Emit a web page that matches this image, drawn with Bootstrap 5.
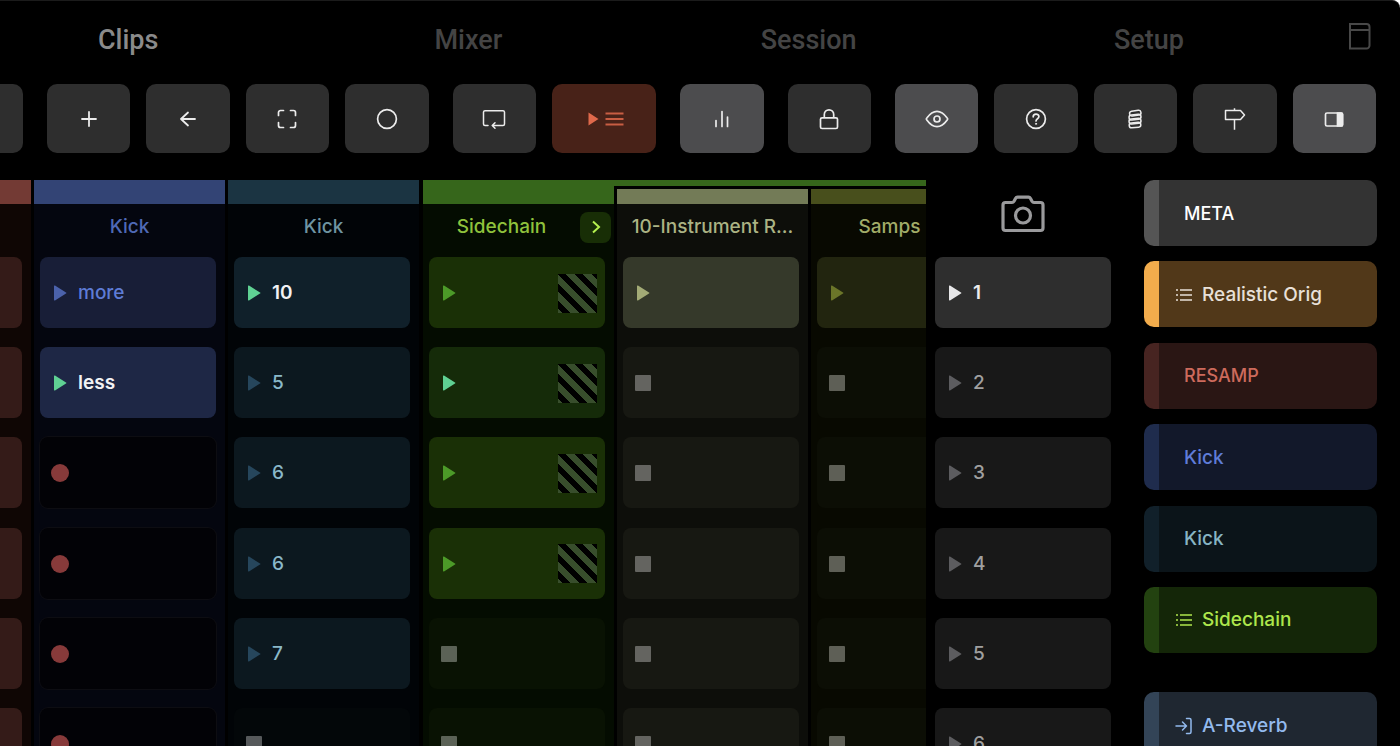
<!DOCTYPE html>
<html lang="en">
<head>
<meta charset="utf-8">
<meta name="viewport" content="width=device-width, initial-scale=1">
<title>Clips</title>
<link href="https://cdn.jsdelivr.net/npm/bootstrap@5.3.0/dist/css/bootstrap.min.css" rel="stylesheet">
<style>
  body { background: #fff; font-family: Inter, "Liberation Sans", sans-serif; font-size: 19px; font-weight: 500; line-height: 24px; }
  button { font: inherit; }
  svg { display: block; flex: none; }
  .app { background: #000; border-top: 1px solid #1b1b1b; border-top-right-radius: 8px; }

  /* main tabs */
  .tabs { height: 83px; }
  .tab-strip { margin-left: -42px; }
  .tab-strip a { color: #444; font-family: Roboto, "Liberation Sans", sans-serif; font-size: 27px; font-weight: 500; line-height: 32px; padding-bottom: 6px; }
  .tab-strip a.active { color: #8a8a8a; }
  .tab-end { width: 81px; color: #484848; padding-bottom: 14px; }

  /* toolbar */
  .toolbar { gap: 16px; padding-right: 24px; }
  .tool { flex: 84 1 0; height: 69px; border: 0; border-radius: 10px; background: #2e2e2e; color: #ececec; padding: 0; }
  .tool.on { background: #4c4c4e; }
  .tool.wide { flex-grow: 105; background: #482218; color: #df694b; gap: 6px; }
  .tool.cut { flex: none; width: 23px; border-radius: 0 10px 10px 0; }

  /* clip grid */
  .board { margin-top: 27px; }
  .tracks { gap: 3px; }
  .track { width: 191px; flex: none; background: var(--bg); }
  .track.edge { width: 31px; }
  .bar { height: 24px; background: var(--bar); }
  .folder { margin-left: 1px; background: #000; }
  .folder .folder-line { height: 6px; background: #36661b; }
  .inner { gap: 3px; padding-left: 3px; }
  .inner .track { margin-top: 3px; }
  .inner .bar { height: 15px; }
  .track-head { height: 46px; color: var(--head); margin-bottom: 7px; }
  .track-head .with-toggle { width: 157px; }
  .toggle { width: 31px; height: 31px; border: 0; border-radius: 8px; background: #182e06; color: #b4f04e; padding: 0; }
  .cells { height: 522px; padding: 0 9px 0 6px; }
  .edge .cells { padding-left: 0; }
  .clip { height: 71px; flex: none; border: 0; border-radius: 8px; background: var(--cell); color: var(--text); padding: 1px 8px 0 11px; gap: 9px; text-align: left; }
  .edge .clip { border-radius: 0 8px 8px 0; }
  .clip svg { color: var(--tri); }
  .clip.empty { background: var(--empty); }
  .clip.empty svg { color: var(--stop); }
  .clip.arm { background: #020206; box-shadow: 0 0 0 1px #0d0d12; }
  .clip.arm svg { color: #873a3a; }
  .clip.live { background: var(--live, var(--cell)); color: #f2f2f4; font-weight: 600; }
  .clip.live svg { color: #5fd193; }
  .hatch { width: 39px; height: 39px; background: repeating-linear-gradient(45deg, #384e2c 0 3px, #000 3px 9px, #384e2c 9px 12px); }

  .t-red { --bar: #733a34; --bg: #0f0604; --cell: #341b18; }
  .t-blue { --bar: #334475; --bg: #04060f; --cell: #181e37; --live: #1e2745; --head: #4f69b6; --text: #5e7cd6; --tri: #4b62ab; }
  .t-teal { --bar: #1b3442; --bg: #010407; --cell: #0c181f; --live: #10202a; --head: #6f94a2; --text: #8ab8c9; --tri: #26465c; --empty: #030709; --stop: #56595b; }
  .t-green { --bar: #36661b; --bg: #040c01; --cell: #1a3006; --live: #152b09; --head: #8fc23c; --tri: #4c9a28; --empty: #091203; --stop: #5b6256; }
  .t-sage { --bar: #737b57; --bg: #0d0e0a; --cell: #35392a; --head: #abb384; --tri: #a3ab76; --empty: #171812; --stop: #646460; }
  .t-olive { --bar: #484f1c; --bg: #080901; --cell: #22250f; --head: #a1ac68; --tri: #6b7529; --empty: #0c0e05; --stop: #5e5f56; }

  /* scenes */
  .scenes { width: 176px; margin-left: 9px; --cell: #181818; --text: #a0a0a0; --tri: #5c5c5f; }
  .snapshot { height: 67px; border: 0; background: none; color: #9a9a9c; padding: 0; margin-bottom: 10px; }
  .scenes .cells { padding: 0; }
  .scenes .clip.now { background: #2e2e2e; color: #ececec; font-weight: 600; --tri: #e6e6e8; }

  /* track list */
  .side { width: 233px; margin: 0 23px 0 33px; }
  .side-group { height: 473px; }
  .side-item { height: 66px; flex: none; border: 0; border-left: 15px solid var(--tab); border-radius: 10px; background: var(--fill); color: var(--ink); padding: 1px 0 0 25px; text-align: left; }
  .side-item.iconed { padding-left: 16px; gap: 9px; }
  .side-item.caps { font-size: 18px; }
</style>
</head>
<body>
<svg width="0" height="0" class="position-absolute" aria-hidden="true">
  <symbol id="play" viewBox="0 0 18 18"><path d="M3 2.2Q3 1 4 1.6L15 8.4Q16 9 15 9.6L4 16.4Q3 17 3 15.8Z" fill="currentColor"/></symbol>
  <symbol id="stop" viewBox="0 0 18 18"><rect x="1" y="1" width="16" height="16" rx="1" fill="currentColor"/></symbol>
  <symbol id="rec" viewBox="0 0 18 18"><circle cx="9" cy="9" r="9" fill="currentColor"/></symbol>
  <symbol id="list" viewBox="0 0 18 18"><path d="M1 4h2M1 9h2M1 14h2M5 4h12M5 9h12M5 14h12" stroke="currentColor" stroke-width="1.600" fill="none"/></symbol>
</svg>

<div class="app vh-100 overflow-hidden d-flex flex-column">
  <header class="tabs d-flex align-items-center flex-shrink-0">
    <nav class="tab-strip d-flex flex-fill" aria-label="Main">
      <a class="active col text-center text-decoration-none" href="#">Clips</a>
      <a class="col text-center text-decoration-none" href="#">Mixer</a>
      <a class="col text-center text-decoration-none" href="#">Session</a>
      <a class="col text-center text-decoration-none" href="#">Setup</a>
    </nav>
    <div class="tab-end d-flex justify-content-center">
      <svg width="24" height="28" viewBox="0 0 24 28" fill="none" stroke="currentColor" stroke-width="2"><path d="M2 2h16.500a3 3 0 0 1 3 3v18.500a3 3 0 0 1-3 3H2ZM2 8h19"/></svg>
    </div>
  </header>

  <div class="toolbar d-flex flex-shrink-0">
    <button class="tool cut" type="button" aria-label="More"></button>
    <button class="tool ms-2 d-flex align-items-center justify-content-center" type="button" aria-label="Add"><svg width="22" height="22" viewBox="0 0 22 22" stroke="currentColor" stroke-width="1.800" stroke-linecap="round"><path d="M4 11h14M11 4v14"/></svg></button>
    <button class="tool d-flex align-items-center justify-content-center" type="button" aria-label="Back"><svg width="22" height="22" viewBox="0 0 22 22" fill="none" stroke="currentColor" stroke-width="1.800" stroke-linecap="round" stroke-linejoin="round"><path d="M18 11H4M11 4.500L4 11l7 6.500"/></svg></button>
    <button class="tool d-flex align-items-center justify-content-center" type="button" aria-label="Fit"><svg width="22" height="22" viewBox="0 0 22 22" fill="none" stroke="currentColor" stroke-width="1.700" stroke-linecap="round"><path d="M2.500 7.500v-3a2 2 0 0 1 2-2h3M14.500 2.500h3a2 2 0 0 1 2 2v3M19.500 14.500v3a2 2 0 0 1-2 2h-3M7.500 19.500h-3a2 2 0 0 1-2-2v-3"/></svg></button>
    <button class="tool d-flex align-items-center justify-content-center" type="button" aria-label="Record"><svg width="22" height="22" viewBox="0 0 22 22" fill="none" stroke="currentColor" stroke-width="1.700"><circle cx="11" cy="11" r="9.400"/></svg></button>
    <button class="tool ms-2 d-flex align-items-center justify-content-center" type="button" aria-label="Loop"><svg width="24" height="22" viewBox="0 0 24 22" fill="none" stroke="currentColor" stroke-width="1.500" stroke-linecap="round" stroke-linejoin="round"><path d="M6 17.500H3a1.500 1.500 0 0 1-1.500-1.500V4A1.500 1.500 0 0 1 3 2.700h18A1.500 1.500 0 0 1 22.500 4v12a1.500 1.500 0 0 1-1.500 1.500H10.500M13 14.700l-2.800 2.800L13 20.200"/></svg></button>
    <button class="tool wide d-flex align-items-center justify-content-center" type="button" aria-label="Play queue"><svg width="15" height="14" viewBox="-4 0 15 14"><path d="M.5.5L10.500 7L.5 13.500Z" fill="currentColor"/></svg><svg width="19" height="16" viewBox="0 0 19 16" stroke="currentColor" stroke-width="2" opacity=".85"><path d="M.5 2.500h18M.5 8h18M.5 13.500h18"/></svg></button>
    <button class="tool on ms-2 d-flex align-items-center justify-content-center" type="button" aria-label="Meters"><svg width="22" height="22" viewBox="0 0 22 22" stroke="currentColor" stroke-width="1.700" stroke-linecap="round"><path d="M5 12.500v6M11 3.500v15M16.500 9v9.500"/></svg></button>
    <button class="tool ms-2 d-flex align-items-center justify-content-center" type="button" aria-label="Lock"><svg width="22" height="22" viewBox="0 0 22 22" fill="none" stroke="currentColor" stroke-width="1.700" stroke-linejoin="round"><rect x="2.500" y="9.800" width="17" height="10.700" rx="1.500"/><path d="M6.300 9.800V6.500a4.700 4.700 0 0 1 9.400 0v3.300"/></svg></button>
    <button class="tool on ms-2 d-flex align-items-center justify-content-center" type="button" aria-label="View"><svg width="24" height="22" viewBox="0 0 24 22" fill="none" stroke="currentColor" stroke-width="1.700"><path d="M1.800 12C1.300 11.400 1.300 10.600 1.800 10C4.500 6.300 7.500 3.300 12 3.300S19.500 6.300 22.200 10C22.700 10.600 22.700 11.400 22.200 12C19.500 15.700 16.500 18.700 12 18.700S4.500 15.700 1.800 12Z"/><circle cx="12" cy="11" r="3"/></svg></button>
    <button class="tool d-flex align-items-center justify-content-center" type="button" aria-label="Help"><svg width="22" height="22" viewBox="0 0 22 22" fill="none" stroke="currentColor" stroke-width="1.700" stroke-linecap="round"><circle cx="11" cy="11" r="9.400"/><path d="M8.200 8.800C8.200 5.200 13.900 5.300 13.900 8.600C13.900 10.800 11 10.600 11 13"/><circle cx="11" cy="15.800" r=".6" fill="currentColor" stroke-width=".8"/></svg></button>
    <button class="tool d-flex align-items-center justify-content-center" type="button" aria-label="Spring"><svg width="22" height="22" viewBox="0 0 22 22" fill="none" stroke="currentColor" stroke-width="1.500"><g transform="translate(0 1)"><rect x="5.500" y="1.800" width="11.500" height="4.800" rx="2.400" transform="rotate(-9 11 4)"/><rect x="5" y="5.600" width="12" height="5" rx="2.500" transform="rotate(-7 11 8)"/><rect x="5" y="9.600" width="12" height="5" rx="2.500" transform="rotate(-5 11 12)"/><rect x="5.200" y="13.600" width="11.600" height="4.900" rx="2.400" transform="rotate(-5 11 16)"/></g></svg></button>
    <button class="tool d-flex align-items-center justify-content-center" type="button" aria-label="Guide"><svg width="22" height="22" viewBox="0 0 22 22" fill="none" stroke="currentColor" stroke-width="1.500" stroke-linejoin="round"><path d="M1.500 2.500h15L20.500 7L16.500 11.500h-15ZM10.500 .2v2.300M10.500 11.500v10.300"/></svg></button>
    <button class="tool on d-flex align-items-center justify-content-center" type="button" aria-label="Side panel"><svg width="22" height="22" viewBox="0 0 22 22" fill="none" stroke="currentColor" stroke-width="1.700"><rect x="2.500" y="5" width="17" height="13" rx="1.500"/><path d="M14.500 5h4a1 1 0 0 1 1 1v11a1 1 0 0 1-1 1h-4Z" fill="currentColor"/></svg></button>
  </div>

  <main class="board d-flex flex-fill">
    <section class="tracks d-flex col overflow-hidden" aria-label="Tracks">
      <div class="track edge t-red">
        <div class="bar"></div><div class="track-head"></div>
        <div class="cells d-flex flex-column justify-content-between">
          <button class="clip" type="button" aria-label="Clip 1"></button><button class="clip" type="button" aria-label="Clip 2"></button><button class="clip" type="button" aria-label="Clip 3"></button><button class="clip" type="button" aria-label="Clip 4"></button><button class="clip" type="button" aria-label="Clip 5"></button><button class="clip" type="button" aria-label="Clip 6"></button>
        </div>
      </div>

      <div class="track t-blue">
        <div class="bar"></div>
        <div class="track-head d-flex align-items-center justify-content-center">Kick</div>
        <div class="cells d-flex flex-column justify-content-between">
          <button class="clip d-flex align-items-center" type="button"><svg width="18" height="18"><use href="#play"/></svg>more</button>
          <button class="clip live d-flex align-items-center" type="button"><svg width="18" height="18"><use href="#play"/></svg>less</button>
          <button class="clip arm d-flex align-items-center" type="button" aria-label="Record"><svg width="18" height="18"><use href="#rec"/></svg></button>
          <button class="clip arm d-flex align-items-center" type="button" aria-label="Record"><svg width="18" height="18"><use href="#rec"/></svg></button>
          <button class="clip arm d-flex align-items-center" type="button" aria-label="Record"><svg width="18" height="18"><use href="#rec"/></svg></button>
          <button class="clip arm d-flex align-items-center" type="button" aria-label="Record"><svg width="18" height="18"><use href="#rec"/></svg></button>
        </div>
      </div>

      <div class="track t-teal">
        <div class="bar"></div>
        <div class="track-head d-flex align-items-center justify-content-center">Kick</div>
        <div class="cells d-flex flex-column justify-content-between">
          <button class="clip live d-flex align-items-center" type="button"><svg width="18" height="18"><use href="#play"/></svg>10</button>
          <button class="clip d-flex align-items-center" type="button"><svg width="18" height="18"><use href="#play"/></svg>5</button>
          <button class="clip d-flex align-items-center" type="button"><svg width="18" height="18"><use href="#play"/></svg>6</button>
          <button class="clip d-flex align-items-center" type="button"><svg width="18" height="18"><use href="#play"/></svg>6</button>
          <button class="clip d-flex align-items-center" type="button"><svg width="18" height="18"><use href="#play"/></svg>7</button>
          <button class="clip empty d-flex align-items-center" type="button" aria-label="Stop"><svg width="18" height="18"><use href="#stop"/></svg></button>
        </div>
      </div>

      <div class="folder d-flex flex-shrink-0">
        <div class="track t-green">
          <div class="bar"></div>
          <div class="track-head d-flex align-items-center">
            <span class="with-toggle text-center">Sidechain</span>
            <button class="toggle d-flex align-items-center justify-content-center" type="button" aria-label="Unfold"><svg width="16" height="16" viewBox="0 0 16 16" fill="none" stroke="currentColor" stroke-width="2"><path d="M5 2.500L11 8L5 13.500"/></svg></button>
          </div>
          <div class="cells d-flex flex-column justify-content-between">
            <button class="clip d-flex align-items-center" type="button" aria-label="Play"><svg width="18" height="18"><use href="#play"/></svg><span class="hatch ms-auto"></span></button>
            <button class="clip live d-flex align-items-center" type="button" aria-label="Play"><svg width="18" height="18"><use href="#play"/></svg><span class="hatch ms-auto"></span></button>
            <button class="clip d-flex align-items-center" type="button" aria-label="Play"><svg width="18" height="18"><use href="#play"/></svg><span class="hatch ms-auto"></span></button>
            <button class="clip d-flex align-items-center" type="button" aria-label="Play"><svg width="18" height="18"><use href="#play"/></svg><span class="hatch ms-auto"></span></button>
            <button class="clip empty d-flex align-items-center" type="button" aria-label="Stop"><svg width="18" height="18"><use href="#stop"/></svg></button>
            <button class="clip empty d-flex align-items-center" type="button" aria-label="Stop"><svg width="18" height="18"><use href="#stop"/></svg></button>
          </div>
        </div>
        <div>
          <div class="folder-line"></div>
          <div class="inner d-flex">
            <div class="track t-sage">
              <div class="bar"></div>
              <div class="track-head d-flex align-items-center justify-content-center">10-Instrument R...</div>
              <div class="cells d-flex flex-column justify-content-between">
                <button class="clip d-flex align-items-center" type="button" aria-label="Play"><svg width="18" height="18"><use href="#play"/></svg></button>
                <button class="clip empty d-flex align-items-center" type="button" aria-label="Stop"><svg width="18" height="18"><use href="#stop"/></svg></button>
                <button class="clip empty d-flex align-items-center" type="button" aria-label="Stop"><svg width="18" height="18"><use href="#stop"/></svg></button>
                <button class="clip empty d-flex align-items-center" type="button" aria-label="Stop"><svg width="18" height="18"><use href="#stop"/></svg></button>
                <button class="clip empty d-flex align-items-center" type="button" aria-label="Stop"><svg width="18" height="18"><use href="#stop"/></svg></button>
                <button class="clip empty d-flex align-items-center" type="button" aria-label="Stop"><svg width="18" height="18"><use href="#stop"/></svg></button>
              </div>
            </div>
            <div class="track t-olive">
              <div class="bar"></div>
              <div class="track-head d-flex align-items-center"><span class="with-toggle text-center">Samps</span></div>
              <div class="cells d-flex flex-column justify-content-between">
                <button class="clip d-flex align-items-center" type="button" aria-label="Play"><svg width="18" height="18"><use href="#play"/></svg></button>
                <button class="clip empty d-flex align-items-center" type="button" aria-label="Stop"><svg width="18" height="18"><use href="#stop"/></svg></button>
                <button class="clip empty d-flex align-items-center" type="button" aria-label="Stop"><svg width="18" height="18"><use href="#stop"/></svg></button>
                <button class="clip empty d-flex align-items-center" type="button" aria-label="Stop"><svg width="18" height="18"><use href="#stop"/></svg></button>
                <button class="clip empty d-flex align-items-center" type="button" aria-label="Stop"><svg width="18" height="18"><use href="#stop"/></svg></button>
                <button class="clip empty d-flex align-items-center" type="button" aria-label="Stop"><svg width="18" height="18"><use href="#stop"/></svg></button>
              </div>
            </div>
          </div>
        </div>
      </div>
    </section>

    <section class="scenes flex-shrink-0" aria-label="Scenes">
      <button class="snapshot w-100 d-flex align-items-center justify-content-center" type="button" aria-label="Snapshot"><svg width="44" height="38" viewBox="0 0 44 38" fill="none" stroke="currentColor" stroke-width="3.200" stroke-linejoin="round"><path d="M4.500 7.500H11Q12.300 7.500 13 6.300L14.500 3.500Q15.200 2.200 16.500 2.200H27.500Q28.800 2.200 29.500 3.500L31 6.300Q31.700 7.500 33 7.500H39.500Q42 7.500 42 10V33Q42 35.500 39.500 35.500H4.500Q2 35.500 2 33V10Q2 7.500 4.500 7.500Z"/><circle cx="22" cy="20.500" r="7.500"/></svg></button>
      <div class="cells d-flex flex-column justify-content-between">
        <button class="clip now d-flex align-items-center" type="button"><svg width="18" height="18"><use href="#play"/></svg>1</button>
        <button class="clip d-flex align-items-center" type="button"><svg width="18" height="18"><use href="#play"/></svg>2</button>
        <button class="clip d-flex align-items-center" type="button"><svg width="18" height="18"><use href="#play"/></svg>3</button>
        <button class="clip d-flex align-items-center" type="button"><svg width="18" height="18"><use href="#play"/></svg>4</button>
        <button class="clip d-flex align-items-center" type="button"><svg width="18" height="18"><use href="#play"/></svg>5</button>
        <button class="clip d-flex align-items-center" type="button"><svg width="18" height="18"><use href="#play"/></svg>6</button>
      </div>
    </section>

    <aside class="side flex-shrink-0" aria-label="Track list">
      <div class="side-group d-flex flex-column justify-content-between">
        <button class="side-item caps" type="button" style="--tab:#555;--fill:#333;--ink:#fff">META</button>
        <button class="side-item iconed d-flex align-items-center" type="button" style="--tab:#f2ac4c;--fill:#513819;--ink:#e8e0d8"><svg width="18" height="18"><use href="#list"/></svg>Realistic Orig</button>
        <button class="side-item caps" type="button" style="--tab:#472421;--fill:#2a1614;--ink:#cd6a5c">RESAMP</button>
        <button class="side-item" type="button" style="--tab:#1f2c4d;--fill:#12182a;--ink:#5f7cd8">Kick</button>
        <button class="side-item" type="button" style="--tab:#11202a;--fill:#0b1419;--ink:#87b4c4">Kick</button>
        <button class="side-item iconed d-flex align-items-center" type="button" style="--tab:#234210;--fill:#142608;--ink:#aee64c"><svg width="18" height="18"><use href="#list"/></svg>Sidechain</button>
      </div>
      <button class="side-item iconed d-flex align-items-center w-100" type="button" style="--tab:#334457;--fill:#1f2731;--ink:#93baee;margin-top:39px"><svg width="18" height="18" viewBox="0 0 18 18" fill="none" stroke="currentColor" stroke-width="1.500" stroke-linecap="round" stroke-linejoin="round"><path d="M1 9h10.500M7.500 5l4 4l-4 4M11.500 1.500h3a1.500 1.500 0 0 1 1.500 1.500v12a1.500 1.500 0 0 1-1.500 1.500h-3"/></svg>A-Reverb</button>
    </aside>
  </main>
</div>
<script src="https://cdn.jsdelivr.net/npm/bootstrap@5.3.0/dist/js/bootstrap.bundle.min.js"></script>
</body>
</html>
